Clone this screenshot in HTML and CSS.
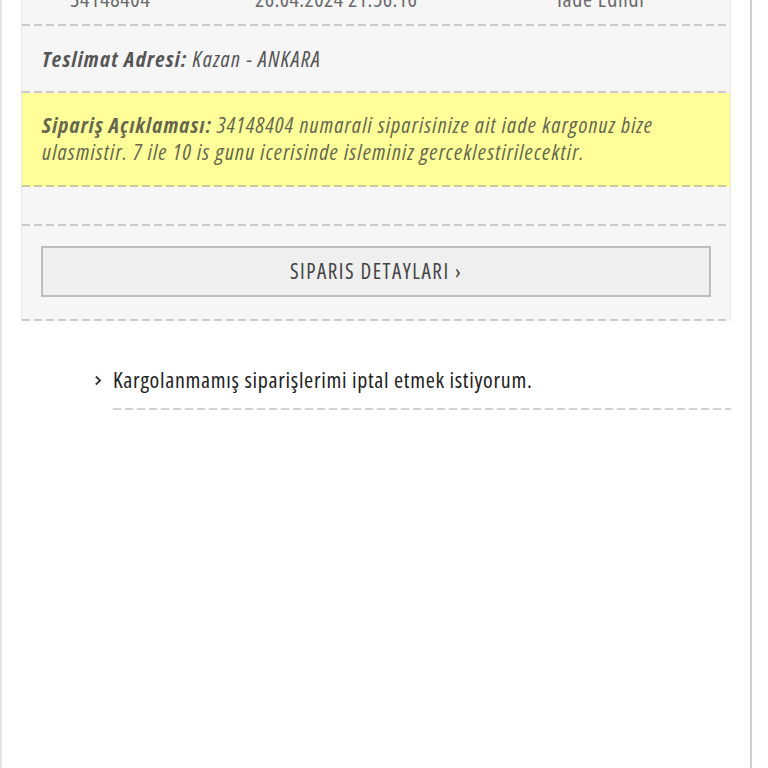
FILE: index.html
```html
<!DOCTYPE html>
<html lang="tr">
<head>
<meta charset="utf-8">
<title>Sipariş</title>
<link rel="stylesheet" href="styles.css">
</head>
<body>
<div class="page">
  <div class="panel">
    <div class="row row-order">
      <span class="col col-no">34148404</span>
      <span class="col col-date">26.04.2024 21:56:16</span>
      <span class="col col-status">Iade Edildi</span>
    </div>
    <div class="row row-address">
      <b>Teslimat Adresi:</b> Kazan - ANKARA
    </div>
    <div class="row row-note">
      <b>Sipariş Açıklaması:</b> 34148404 numarali siparisinize ait iade kargonuz bize ulasmistir. 7 ile 10 is gunu icerisinde isleminiz gerceklestirilecektir.
    </div>
    <div class="row row-empty"></div>
    <div class="row row-action">
      <a class="btn" href="#">SIPARIS DETAYLARI ›</a>
    </div>
  </div>
  <ul class="faq">
    <li class="faq-item">
      <svg class="chev" width="8" height="11" viewBox="0 0 8 11"><path d="M1.8 1.5 L6.2 5.5 L1.8 9.5" fill="none" stroke="#333" stroke-width="1.7"/></svg>
      <span class="faq-text">Kargolanmamış siparişlerimi iptal etmek istiyorum.</span>
    </li>
  </ul>
</div>
</body>
</html>
```
FILE: styles.css
```css
html, body {
  margin: 0;
  padding: 0;
  background: #fff;
}
body {
  font-family: "Open Sans", "Roboto", sans-serif;
  font-stretch: 75%;
  font-size: 22px;
  letter-spacing: 0.7px;
  line-height: 27px;
  color: #555;
  overflow: hidden;
}
.page {
  width: 748px;
  min-height: 800px;
  border-left: 2px solid #e4e4e4;
  border-right: 2px solid #cfcfcf;
  box-sizing: content-box;
}
.panel {
  margin-left: 19px;
  width: 708px;
  margin-top: -27px;
  background: #f6f6f7;
  border-left: 1px solid #e8e8e8;
  border-right: 1px solid #e8e8e8;
}
.row {
  background-image: repeating-linear-gradient(to right, #cbcbcb 0 8px, transparent 8px 12px);
  background-repeat: no-repeat;
  background-position: left bottom;
  background-size: 100% 2px;
  padding-bottom: 2px;
}
.row-order {
  display: grid;
  grid-template-columns: 185px 302px 1fr;
  padding: 12px 0 14px 48px;
  color: #6a6a6a;
}
.col-date {
  letter-spacing: 0.4px;
}
.row-address {
  padding: 19px 20px 21px;
  font-style: italic;
  letter-spacing: 1.3px;
}
.row-address b,
.row-note b {
  font-weight: bold;
}
.row-note {
  background-color: #ffff99;
  background-image: repeating-linear-gradient(to right, #c9c9a6 0 8px, transparent 8px 12px);
  padding: 18px 20px 22px;
  font-style: italic;
  letter-spacing: 1.2px;
  color: #66664f;
}
.row-empty {
  height: 37px;
  padding-bottom: 2px;
}
.row-action {
  padding: 20px 19px 24px;
}
.btn {
  display: block;
  height: 47px;
  line-height: 47px;
  border: 2px solid #bdbdbd;
  background: #efefef;
  text-align: center;
  color: #444;
  font-size: 21px;
  letter-spacing: 1.5px;
  text-decoration: none;
}
.faq {
  list-style: none;
  margin: 0;
  padding: 45px 0 0 0;
}
.faq-item {
  display: flex;
  align-items: flex-start;
  margin-left: 92px;
  width: 637px;
}
.chev {
  flex: none;
  margin: 9px 11px 0 0;
}
.faq-text {
  flex: 1;
  color: #222;
  padding-bottom: 17px;
  background-image: repeating-linear-gradient(to right, #d2d2d2 0 8px, transparent 8px 12px);
  background-repeat: no-repeat;
  background-position: left bottom;
  background-size: 100% 2px;
}
```
